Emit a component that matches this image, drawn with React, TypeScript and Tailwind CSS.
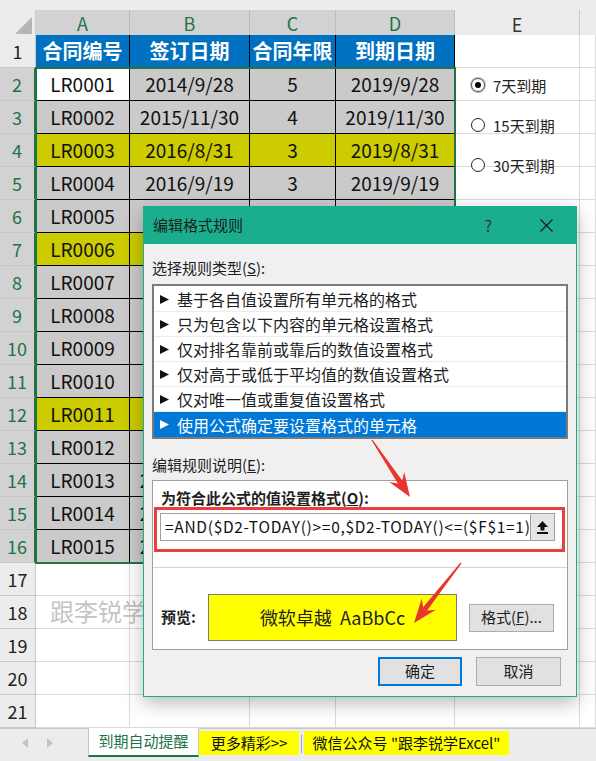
import React from 'react';

type Contract = { id: string; sign: string; years: string; due: string; hl?: boolean };

const contracts: Contract[] = [
  { id: 'LR0001', sign: '2014/9/28', years: '5', due: '2019/9/28' },
  { id: 'LR0002', sign: '2015/11/30', years: '4', due: '2019/11/30' },
  { id: 'LR0003', sign: '2016/8/31', years: '3', due: '2019/8/31', hl: true },
  { id: 'LR0004', sign: '2016/9/19', years: '3', due: '2019/9/19' },
  { id: 'LR0005', sign: '2016/9/25', years: '3', due: '2019/9/25' },
  { id: 'LR0006', sign: '2017/9/3', years: '2', due: '2019/9/3', hl: true },
  { id: 'LR0007', sign: '2018/10/5', years: '1', due: '2019/10/5' },
  { id: 'LR0008', sign: '2016/11/8', years: '3', due: '2019/11/8' },
  { id: 'LR0009', sign: '2017/12/1', years: '2', due: '2019/12/1' },
  { id: 'LR0010', sign: '2015/10/9', years: '4', due: '2019/10/9' },
  { id: 'LR0011', sign: '2016/9/12', years: '3', due: '2019/9/12', hl: true },
  { id: 'LR0012', sign: '2017/11/6', years: '2', due: '2019/11/6' },
  { id: 'LR0013', sign: '2017/10/16', years: '2', due: '2019/10/16' },
  { id: 'LR0014', sign: '2016/11/25', years: '3', due: '2019/11/25' },
  { id: 'LR0015', sign: '2015/12/18', years: '4', due: '2019/12/18' },
];

const headers = ['合同编号', '签订日期', '合同年限', '到期日期'];

const ruleTypes = [
  '基于各自值设置所有单元格的格式',
  '只为包含以下内容的单元格设置格式',
  '仅对排名靠前或靠后的数值设置格式',
  '仅对高于或低于平均值的数值设置格式',
  '仅对唯一值或重复值设置格式',
  '使用公式确定要设置格式的单元格',
];

const GRID = 'grid grid-cols-[36px_94px_120px_86px_119px_125px_1fr]';

function RowHead({ n }: { n: number }) {
  const sel = n >= 2 && n <= 16;
  return (
    <div
      className={
        'h-[33px] flex items-center justify-center text-[18px] border-b border-[#c8c8c8] ' +
        (sel
          ? 'bg-[#d2d2d2] text-[#217346] border-r-2 border-r-[#217346]'
          : 'bg-[#ececec] text-[#222] border-r border-r-[#c8c8c8]')
      }
    >
      {n}
    </div>
  );
}

function Blank() {
  return <div className="h-[33px] bg-white border-r border-b border-[#dadada]" />;
}

function SheetRow({ n }: { n: number }) {
  if (n === 1) {
    return (
      <>
        <RowHead n={1} />
        {headers.map((h) => (
          <div
            key={h}
            className="h-[33px] flex items-center justify-center bg-[#0070c0] text-white font-bold text-[20px] border-r border-b border-black"
          >
            {h}
          </div>
        ))}
        <Blank />
        <Blank />
      </>
    );
  }
  const c = contracts[n - 2];
  if (!c) {
    return (
      <>
        <RowHead n={n} />
        <Blank />
        <Blank />
        <Blank />
        <Blank />
        <Blank />
        <Blank />
      </>
    );
  }
  const fill = c.hl ? 'bg-[#cccc00]' : 'bg-[#cacaca]';
  const cell = 'h-[33px] flex items-center justify-center text-[19px] text-[#111] border-r border-b border-black ';
  return (
    <>
      <RowHead n={n} />
      <div className={cell + (n === 2 ? 'bg-white' : fill)}>{c.id}</div>
      <div className={cell + fill + ' whitespace-nowrap'}>{c.sign}</div>
      <div className={cell + fill}>{c.years}</div>
      <div className={cell + fill + ' whitespace-nowrap'}>{c.due}</div>
      <Blank />
      <Blank />
    </>
  );
}

function arrowPoints(x1: number, y1: number, x2: number, y2: number) {
  const dx = x2 - x1;
  const dy = y2 - y1;
  const len = Math.hypot(dx, dy);
  const ux = dx / len;
  const uy = dy / len;
  const nx = -uy;
  const ny = ux;
  const head = 24;
  const neck = 18;
  const p = (x: number, y: number) => `${x.toFixed(1)},${y.toFixed(1)}`;
  const bx = x2 - ux * head;
  const by = y2 - uy * head;
  const kx = x2 - ux * neck;
  const ky = y2 - uy * neck;
  return [
    p(x1 + nx * 0.6, y1 + ny * 0.6),
    p(kx + nx * 2.6, ky + ny * 2.6),
    p(bx + nx * 9, by + ny * 9),
    p(x2, y2),
    p(bx - nx * 9, by - ny * 9),
    p(kx - nx * 2.6, ky - ny * 2.6),
    p(x1 - nx * 0.6, y1 - ny * 0.6),
  ].join(' ');
}

function Radio({ label, checked }: { label: string; checked?: boolean }) {
  return (
    <div className="h-[14px] flex items-center gap-[8px] text-[15px] text-[#222]">
      <span
        className={
          'w-[14px] h-[14px] rounded-full bg-white flex items-center justify-center border ' +
          (checked ? 'border-[#555] ring-1 ring-[#bbb]' : 'border-[#222]')
        }
      >
        {checked && <span className="w-[6px] h-[6px] rounded-full bg-black" />}
      </span>
      <span className="leading-none">{label}</span>
    </div>
  );
}

function Btn({ children, primary, className = '' }: { children: React.ReactNode; primary?: boolean; className?: string }) {
  return (
    <div
      className={
        'flex items-center justify-center bg-[#e1e1e1] text-[15px] text-[#1e1e1e] ' +
        (primary ? 'border-2 border-[#0078d7] ' : 'border border-[#adadad] ') +
        className
      }
    >
      {children}
    </div>
  );
}

function RuleDialog() {
  return (
    <div className="absolute left-[143px] top-[206px] w-[434px] h-[491px] bg-[#f0f0f0] border border-[#1aae8f] shadow-[0_6px_18px_rgba(0,0,0,0.28)] flex flex-col">
      <div className="h-[38px] -mx-px -mt-px bg-[#1aae8f] flex items-center justify-between pl-[10px] pr-[24px] text-[#1b1b1b]">
        <span className="text-[15px]">编辑格式规则</span>
        <div className="flex items-center gap-[48px]">
          <span className="text-[16px] text-[#333]">?</span>
          <svg width="13" height="13" viewBox="0 0 13 13">
            <path d="M0.5 0.5 L12.5 12.5 M12.5 0.5 L0.5 12.5" stroke="#1b1b1b" strokeWidth="1.2" />
          </svg>
        </div>
      </div>

      <div className="flex flex-col px-[8px]">
        <div className="pt-[14px] h-[34px] text-[15px] leading-[20px] text-[#1e1e1e]">
          选择规则类型(<span className="underline">S</span>):
        </div>
        <div className="mt-[6px] h-[155px] border-2 border-[#7a7a7a] bg-white pt-px">
          {ruleTypes.map((t, i) => {
            const sel = i === ruleTypes.length - 1;
            return (
              <div
                key={t}
                className={
                  'h-[25px] flex items-center pl-[6px] text-[16px] whitespace-nowrap ' +
                  (sel ? 'bg-[#0078d7] text-white' : 'text-[#1e1e1e] border-b border-[#ececec]')
                }
              >
                <svg width="9" height="9" viewBox="0 0 9 9" className="mr-[8px]">
                  <path d="M0 0 L9 4.5 L0 9 Z" fill={sel ? '#fff' : '#111'} />
                </svg>
                {t}
              </div>
            );
          })}
        </div>

        <div className="mt-[16px] h-[20px] text-[15px] leading-[20px] text-[#1e1e1e]">
          编辑规则说明(<span className="underline">E</span>):
        </div>

        <div className="mt-[5px] h-[170px] border border-[#a0a0a0] bg-white flex flex-col">
          <div className="pt-[8px] pl-[8px] h-[26px] text-[15px] leading-[18px] font-bold text-[#1e1e1e]">
            为符合此公式的值设置格式(<span className="underline">O</span>):
          </div>
          <div className="ml-px w-[411px] h-[45px] border-[3px] border-[#e8403c] pl-[3px] pt-[3px] flex">
            <div className="w-[371px] h-[28px] border border-[#a0a0a0] bg-white flex items-center pl-[4px] text-[15.5px] tracking-[0.7px] text-[#111] whitespace-nowrap overflow-hidden">
              =AND($D2-TODAY()&gt;=0,$D2-TODAY()&lt;=($F$1=1)
            </div>
            <div className="w-[24px] h-[28px] border border-[#a0a0a0] border-l-0 bg-[#e5e5e5] flex items-center justify-center">
              <svg width="11" height="13" viewBox="0 0 11 13">
                <path d="M5.5 0 L11 6 L7.5 6 L7.5 9.5 L3.5 9.5 L3.5 6 L0 6 Z" fill="#111" />
                <rect x="0" y="11" width="11" height="2" fill="#111" />
              </svg>
            </div>
          </div>
          <div className="mt-[15px] h-px bg-[#d4d4d4]" />
          <div className="mt-[26px] flex items-center">
            <span className="pl-[8px] w-[55px] text-[15px] font-bold text-[#1e1e1e]">预览:</span>
            <div className="w-[249px] h-[47px] border border-[#7a7a7a] bg-[#ffff00] flex items-center justify-center text-[18px] text-[#222] whitespace-pre">
              微软卓越  AaBbCc
            </div>
            <Btn className="ml-[12px] w-[85px] h-[28px]">
              格式(<span className="underline">F</span>)...
            </Btn>
          </div>
        </div>

        <div className="mt-[7px] pr-[7px] flex justify-end gap-[14px]">
          <Btn primary className="w-[84px] h-[29px]">确定</Btn>
          <Btn className="w-[85px] h-[29px]">取消</Btn>
        </div>
      </div>
    </div>
  );
}

export default function App() {
  const rows = Array.from({ length: 21 }, (_, i) => i + 1);
  return (
    <div className="relative w-[596px] h-[761px] overflow-hidden bg-white font-['Noto_Sans_CJK_SC',sans-serif]">
      <div className="h-[10px] bg-[#ececec]" />
      <div className={GRID + ' h-[25px]'}>
        <div className="bg-[#ececec] border-r border-b border-[#c8c8c8] flex items-end justify-end pr-[3px] pb-[4px]">
          <svg width="17" height="17" viewBox="0 0 17 17">
            <path d="M17 0 L17 17 L0 17 Z" fill="#b5b5b5" />
          </svg>
        </div>
        {['A', 'B', 'C', 'D'].map((l) => (
          <div
            key={l}
            className="flex items-center justify-center bg-[#d2d2d2] text-[#217346] text-[18px] border-r border-r-[#bdbdbd] border-b-2 border-b-[#217346]"
          >
            {l}
          </div>
        ))}
        <div className="flex items-center justify-center bg-[#ececec] text-[#333] text-[18px] border-r border-b border-[#c8c8c8]">E</div>
        <div className="bg-[#ececec] border-b border-[#c8c8c8]" />
      </div>
      <div className={GRID}>
        {rows.map((n) => (
          <SheetRow key={n} n={n} />
        ))}
      </div>

      {/* selection A2:D16 */}
      <div className="absolute left-[35px] top-[67px] w-[421px] h-[497px] border-2 border-[#217346] pointer-events-none" />

      {/* option buttons floating on the sheet */}
      <div className="absolute left-[471px] top-[78px] flex flex-col gap-[26px]">
        <Radio label="7天到期" checked />
        <Radio label="15天到期" />
        <Radio label="30天到期" />
      </div>

      <div className="absolute left-[50px] top-[596px] text-[24px] leading-[30px] text-[#c4c4c4] whitespace-nowrap">
        跟李锐学
      </div>

      <RuleDialog />

      <svg className="absolute inset-0 pointer-events-none" width="596" height="761" viewBox="0 0 596 761">
        <polygon points={arrowPoints(372, 440, 410, 497)} fill="#e8352f" />
        <polygon points={arrowPoints(461, 563, 414, 623)} fill="#e8352f" />
      </svg>

      {/* sheet tabs */}
      <div className="absolute left-0 right-0 bottom-0 h-[33px] bg-[#ececec] border-t border-[#c6c6c6] flex items-start">
        <div className="w-[88px] h-[28px] flex items-center pl-[22px] gap-[19px]">
          <svg width="6" height="10" viewBox="0 0 6 10">
            <path d="M6 0 L0 5 L6 10 Z" fill="#c4c4c4" />
          </svg>
          <svg width="6" height="10" viewBox="0 0 6 10">
            <path d="M0 0 L6 5 L0 10 Z" fill="#c4c4c4" />
          </svg>
        </div>
        <div className="-mt-px w-[111px] h-[29px] bg-white border-x border-[#c6c6c6] border-b-2 border-b-[#217346] flex items-center justify-center text-[15px] text-[#217346]">
          到期自动提醒
        </div>
        <div className="mt-[2px] w-[100px] h-[24px] bg-[#ffff00] flex items-center justify-center text-[15px] text-[#111] whitespace-nowrap">
          更多精彩&gt;&gt;
        </div>
        <div className="mt-[6px] ml-[2px] w-px h-[18px] bg-[#aaa]" />
        <div className="mt-[2px] ml-[2px] w-[205px] h-[24px] bg-[#ffff00] flex items-center justify-center text-[15px] text-[#111] whitespace-nowrap">
          微信公众号 "跟李锐学Excel"
        </div>
      </div>
    </div>
  );
}
